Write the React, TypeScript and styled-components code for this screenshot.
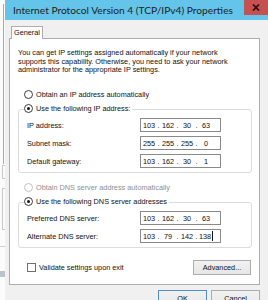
import React from "react";
import styled, { createGlobalStyle } from "styled-components";

const GlobalStyle = createGlobalStyle`
  html, body {
    margin: 0;
    padding: 0;
    background: #fff;
  }
`;

const Screen = styled.div`
  display: flex;
  width: 268px;
  height: 300px;
  overflow: hidden;
  font-family: "Liberation Sans", Arial, sans-serif;
  font-size: 7.3px;
  color: #111;
`;

/* strip of the window that sits behind the dialog */
const Backdrop = styled.div`
  flex: none;
  width: 5px;
  background: #fbfbfb;
  display: flex;
  flex-direction: column;
`;

const BackRail = styled.div<{ $top: number; $height: number }>`
  margin-top: ${(p) => p.$top}px;
  height: ${(p) => p.$height}px;
  width: 3px;
  border-right: 1px solid #a9a9a9;
  flex: none;
`;

const BackBox = styled.div<{ $top: number; $height: number }>`
  margin-top: ${(p) => p.$top}px;
  height: ${(p) => p.$height}px;
  margin-left: 2px;
  border: 1px solid #c9c9c9;
  border-right: none;
  flex: none;
`;

const BackBand = styled.div<{ $top: number; $height: number; $color: string }>`
  margin-top: ${(p) => p.$top}px;
  height: ${(p) => p.$height}px;
  background: ${(p) => p.$color};
  flex: none;
`;

const Window = styled.div`
  flex: 1;
  min-width: 0;
  display: flex;
  flex-direction: column;
  background: #64c4ea;
`;

const TitleBar = styled.div`
  flex: none;
  height: 20px;
  display: flex;
  align-items: flex-start;
`;

const Title = styled.div`
  flex: 1;
  padding: 3px 0 0 8px;
  font-family: Lato, "Open Sans", sans-serif;
  font-size: 10.2px;
  line-height: 14px;
  color: #1e1e1e;
  white-space: nowrap;
  overflow: hidden;
`;

const CloseButton = styled.div`
  flex: none;
  width: 24px;
  height: 15px;
  background: #c75050;
  display: flex;
  align-items: center;
  justify-content: center;
`;

const Client = styled.div`
  flex: 1;
  background: #f0f0f0;
  padding: 6px 0 0 4px;
  display: flex;
  flex-direction: column;
  align-items: flex-start;
`;

const TabStrip = styled.div`
  display: flex;
  padding-left: 2px;
  margin-bottom: -1px;
  position: relative;
  z-index: 1;
`;

const Tab = styled.div`
  height: 12px;
  padding: 0 2px;
  line-height: 12px;
  border: 1px solid #adadad;
  border-bottom: none;
  background: #fff;
`;

const TabPage = styled.div`
  width: 251px;
  box-sizing: border-box;
  background: #fff;
  border: 1px solid #adadad;
  padding: 10px 7px 9px 8px;
  display: flex;
  flex-direction: column;
`;

const Intro = styled.p`
  margin: 0;
  line-height: 8.5px;
  white-space: nowrap;
`;

const Option = styled.label<{ $disabled?: boolean; $inset?: number; $top?: number }>`
  display: flex;
  align-items: center;
  gap: 3px;
  height: 14px;
  margin-left: ${(p) => p.$inset ?? 0}px;
  margin-top: ${(p) => p.$top ?? 0}px;
  color: ${(p) => (p.$disabled ? "#8e8e8e" : "inherit")};
  white-space: nowrap;
`;

const RadioDot = styled.span<{ $checked?: boolean; $disabled?: boolean }>`
  flex: none;
  width: 9px;
  height: 9px;
  box-sizing: border-box;
  border-radius: 50%;
  border: 1px solid ${(p) => (p.$disabled ? "#c2c2c2" : "#3c3c3c")};
  background: #fff;
  display: flex;
  align-items: center;
  justify-content: center;

  &::after {
    content: "";
    display: ${(p) => (p.$checked ? "block" : "none")};
    width: 3px;
    height: 3px;
    border-radius: 50%;
    background: #151515;
  }
`;

const Group = styled.fieldset`
  margin: 0;
  padding: 0 0 4px 8px;
  border: 1px solid #dcdcdc;
  border-radius: 3px;
  display: flex;
  flex-direction: column;
  gap: 4px;
  min-width: 0;
`;

const Legend = styled.legend`
  margin-left: -3px;
  padding: 0 2px 3px 0;
`;

const FieldRow = styled.div`
  display: flex;
  align-items: center;
  height: 14px;
`;

const FieldLabel = styled.span`
  flex: none;
  width: 113px;
  white-space: nowrap;
`;

const IpBox = styled.div`
  flex: none;
  width: 81px;
  height: 14px;
  box-sizing: border-box;
  border: 1px solid #8a8a8a;
  background: #fff;
  display: flex;
  align-items: center;
`;

const Octet = styled.span`
  width: 16px;
  display: flex;
  justify-content: center;
  align-items: center;
`;

const Dot = styled.span`
  width: 3px;
  text-align: center;
`;

const Caret = styled.span`
  width: 0;
  height: 10px;
  margin-left: 1px;
  border-left: 1px solid #111;
`;

const ActionRow = styled.div`
  display: flex;
  align-items: center;
  justify-content: space-between;
  margin-top: 12px;
  padding-left: 9px;
  padding-right: 1px;
`;

const CheckLabel = styled.label`
  display: flex;
  align-items: center;
  gap: 3px;
  white-space: nowrap;
`;

const CheckBox = styled.span`
  width: 9px;
  height: 9px;
  box-sizing: border-box;
  border: 1px solid #707070;
  background: #fff;
`;

const Button = styled.button<{ $width: number; $default?: boolean }>`
  width: ${(p) => p.$width}px;
  height: ${(p) => (p.$default !== undefined ? 17 : 15)}px;
  padding: 0;
  box-sizing: border-box;
  border: 1px solid ${(p) => (p.$default ? "#4f8fcc" : "#acacac")};
  background: linear-gradient(#f2f2f2, #e6e6e6);
  font-family: inherit;
  font-size: 7.3px;
  color: #111;
`;

const Footer = styled.div`
  width: 251px;
  display: flex;
  justify-content: flex-end;
  gap: 4px;
  margin-top: 5px;
`;

function IpField({ value, caret }: { value: string; caret?: boolean }) {
  const parts = value.split(".");
  return (
    <IpBox>
      {parts.map((part, i) => (
        <React.Fragment key={i}>
          {i > 0 && <Dot>.</Dot>}
          <Octet>
            {part}
            {caret && i === parts.length - 1 && <Caret />}
          </Octet>
        </React.Fragment>
      ))}
    </IpBox>
  );
}

function Radio({
  label,
  checked,
  disabled,
  inset,
  top,
}: {
  label: string;
  checked?: boolean;
  disabled?: boolean;
  inset?: number;
  top?: number;
}) {
  return (
    <Option $disabled={disabled} $inset={inset} $top={top}>
      <RadioDot $checked={checked} $disabled={disabled} />
      {label}
    </Option>
  );
}

const ipRows = [
  { label: "IP address:", value: "103.162.30.63" },
  { label: "Subnet mask:", value: "255.255.255.0" },
  { label: "Default gateway:", value: "103.162.30.1" },
];

const dnsRows = [
  { label: "Preferred DNS server:", value: "103.162.30.63" },
  { label: "Alternate DNS server:", value: "103.79.142.138", caret: true },
];

export default function App() {
  return (
    <>
      <GlobalStyle />
      <Screen>
        <Backdrop>
          <BackRail $top={4} $height={160} />
          <BackBox $top={1} $height={12} />
          <BackBox $top={9} $height={40} />
          <BackBand $top={16} $height={1} $color="#cfcfcf" />
          <BackBand $top={24} $height={6} $color="#b9c3cc" />
        </Backdrop>
        <Window>
          <TitleBar>
            <Title>Internet Protocol Version 4 (TCP/IPv4) Properties</Title>
            <CloseButton>
              <svg width="8" height="7" viewBox="0 0 8 7">
                <path d="M1 0.5 L7 6.5 M7 0.5 L1 6.5" stroke="#2a0f0f" strokeWidth="1.7" />
              </svg>
            </CloseButton>
          </TitleBar>
          <Client>
            <TabStrip>
              <Tab>General</Tab>
            </TabStrip>
            <TabPage>
              <Intro>
                You can get IP settings assigned automatically if your network
                <br />
                supports this capability. Otherwise, you need to ask your network
                <br />
                administrator for the appropriate IP settings.
              </Intro>
              <Radio label="Obtain an IP address automatically" inset={6} top={12.5} />
              <Group>
                <Legend>
                  <Radio label="Use the following IP address:" checked />
                </Legend>
                {ipRows.map((row) => (
                  <FieldRow key={row.label}>
                    <FieldLabel>{row.label}</FieldLabel>
                    <IpField value={row.value} />
                  </FieldRow>
                ))}
              </Group>
              <Radio label="Obtain DNS server address automatically" disabled inset={6} top={7} />
              <Group>
                <Legend>
                  <Radio label="Use the following DNS server addresses" checked />
                </Legend>
                {dnsRows.map((row) => (
                  <FieldRow key={row.label}>
                    <FieldLabel>{row.label}</FieldLabel>
                    <IpField value={row.value} caret={row.caret} />
                  </FieldRow>
                ))}
              </Group>
              <ActionRow>
                <CheckLabel>
                  <CheckBox />
                  Validate settings upon exit
                </CheckLabel>
                <Button $width={58}>Advanced...</Button>
              </ActionRow>
            </TabPage>
            <Footer>
              <Button $width={49} $default>
                OK
              </Button>
              <Button $width={49} $default={false}>
                Cancel
              </Button>
            </Footer>
          </Client>
        </Window>
      </Screen>
    </>
  );
}
